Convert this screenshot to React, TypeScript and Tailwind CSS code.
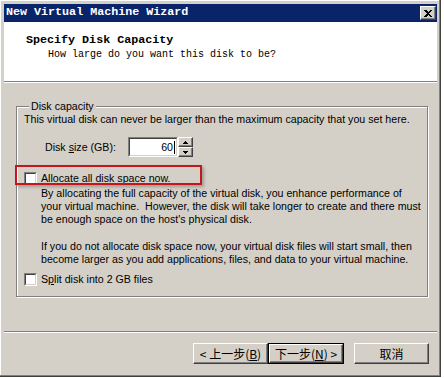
import React from "react";

const Check = () => (
  <div className="w-[13px] h-[13px] shrink-0 border border-t-[#808080] border-l-[#808080] border-b-white border-r-white">
    <div className="w-full h-full bg-white border border-t-[#404040] border-l-[#404040] border-b-[#d4d0c8] border-r-[#d4d0c8]" />
  </div>
);

const bevel =
  "border border-t-white border-l-white border-b-[#404040] border-r-[#404040] shadow-[inset_-1px_-1px_0_#808080]";

export default function App() {
  return (
    <div className="w-[444px] h-[378px] bg-white font-['Liberation_Sans',Arial,sans-serif] text-black">
      <div className="w-[441px] h-[377px] bg-[#d4d0c8] flex flex-col pt-[4px] pl-[4px] pr-[4px] shadow-[inset_-1px_-1px_0_#404040,inset_-2px_-2px_0_#808080,inset_1px_1px_0_#ffffff]">
        {/* title bar */}
        <div className="h-[18px] shrink-0 bg-[#0a246a] flex items-center pl-[2px] pr-[1px]">
          <span className="text-white font-bold text-[11.7px] leading-none font-['Liberation_Mono',monospace] whitespace-pre">
            New Virtual Machine Wizard
          </span>
          <div className={`ml-auto w-[16px] h-[14px] bg-[#d4d0c8] flex items-center justify-center ${bevel}`}>
            <svg width="8" height="7" viewBox="0 0 8 7" shapeRendering="crispEdges">
              <path d="M0 0h2l2 2l2-2h2l-3 3.5l3 3.5h-2l-2-2l-2 2h-2l3-3.5z" fill="#000" />
            </svg>
          </div>
        </div>

        {/* header */}
        <div className="h-[59px] shrink-0 bg-white pl-[22px] pt-[11px] font-['Liberation_Mono',monospace]">
          <div className="font-bold text-[11.7px] leading-[14px] whitespace-pre">Specify Disk Capacity</div>
          <div className="text-[10px] leading-[12px] mt-[2px] pl-[22px] whitespace-pre">
            How large do you want this disk to be?
          </div>
        </div>
        <div className="h-[2px] shrink-0 border-t border-[#808080] border-b border-b-white" />

        {/* body */}
        <fieldset className="mt-[17px] ml-[12px] w-[412px] h-[197px] border border-[#808080] shadow-[inset_1px_1px_0_#ffffff,1px_1px_0_#ffffff] pl-[7px] text-[10.65px] leading-[13px]">
          <legend className="ml-[5px] px-[2px] bg-[#d4d0c8] leading-[13px]">Disk capacity</legend>
          <div className="whitespace-pre">
            This virtual disk can never be larger than the maximum capacity that you set here.
          </div>

          <div className="flex items-center mt-[11px] pl-[21px]">
            <span className="w-[83px] whitespace-pre">
              Disk <span className="underline">s</span>ize (GB):
            </span>
            <div className="w-[50px] h-[20px] border border-t-[#808080] border-l-[#808080] border-b-white border-r-white">
              <div className="w-full h-full bg-white border border-t-[#404040] border-l-[#404040] border-b-[#d4d0c8] border-r-[#d4d0c8] flex items-center justify-end pr-[1px]">
                <span>60</span>
                <span className="w-[1px] h-[13px] bg-black ml-[1px]" />
              </div>
            </div>
            <div className="flex flex-col h-[20px] w-[15px]">
              <div className={`h-[10px] bg-[#d4d0c8] flex items-center justify-center ${bevel}`}>
                <svg width="5" height="3" viewBox="0 0 5 3" shapeRendering="crispEdges">
                  <path d="M2 0h1v1h1v1h1v1h-5v-1h1v-1h1z" fill="#000" />
                </svg>
              </div>
              <div className={`h-[10px] bg-[#d4d0c8] flex items-center justify-center ${bevel}`}>
                <svg width="5" height="3" viewBox="0 0 5 3" shapeRendering="crispEdges">
                  <path d="M0 0h5v1h-1v1h-1v1h-1v-1h-1v-1h-1z" fill="#000" />
                </svg>
              </div>
            </div>
          </div>

          <div className="relative flex items-center mt-[15px] h-[13px]">
            <Check />
            <span className="ml-[4px] whitespace-pre">
              <span className="underline">A</span>llocate all disk space now.
            </span>
            <div className="absolute left-[-9px] top-[-7px] w-[187px] h-[20px] border-2 border-[#c4161c] shadow-[2px_2px_3px_rgba(0,0,0,0.25)] pointer-events-none" />
          </div>

          <div className="mt-[2px] pl-[17px] whitespace-pre">
            <div>By allocating the full capacity of the virtual disk, you enhance performance of</div>
            <div>your virtual machine.  However, the disk will take longer to create and there must</div>
            <div>be enough space on the host's physical disk.</div>
          </div>
          <div className="mt-[14px] pl-[17px] whitespace-pre">
            <div>If you do not allocate disk space now, your virtual disk files will start small, then</div>
            <div>become larger as you add applications, files, and data to your virtual machine.</div>
          </div>

          <div className="flex items-center mt-[7px] h-[13px]">
            <Check />
            <span className="ml-[4px] whitespace-pre">
              S<span className="underline">p</span>lit disk into 2 GB files
            </span>
          </div>
        </fieldset>

        <div className="mt-[34px] h-[2px] shrink-0 border-t border-[#808080] border-b border-b-white" />

        {/* buttons */}
        <div className="mt-[10px] flex justify-end pr-[8px] text-[12px] font-['Noto_Sans_CJK_SC',sans-serif]">
          <div className={`w-[75px] h-[21px] bg-[#d4d0c8] flex items-center justify-center whitespace-pre leading-none ${bevel}`}>
            {"< 上一步("}<span className="underline">B</span>{")"}
          </div>
          <div className="w-[76px] h-[21px] border border-black">
            <div className={`w-full h-full bg-[#d4d0c8] flex items-center justify-center whitespace-pre leading-none ${bevel}`}>
              {"下一步("}<span className="underline">N</span>{") >"}
            </div>
          </div>
          <div className={`ml-[10px] w-[75px] h-[21px] bg-[#d4d0c8] flex items-center justify-center leading-none ${bevel}`}>
            取消
          </div>
        </div>
      </div>
    </div>
  );
}
